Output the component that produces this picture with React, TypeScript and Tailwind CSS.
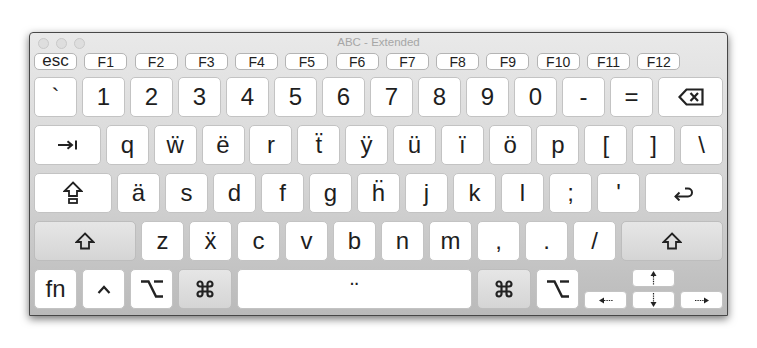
import React from "react";
import { Command } from "lucide-react";

const font = { fontFamily: '"Liberation Sans", Arial, sans-serif' };

function Key({
  children,
  w = "w-[43px]",
  grey = false,
  extra = "",
}: {
  children?: React.ReactNode;
  w?: string;
  grey?: boolean;
  extra?: string;
}) {
  return (
    <div
      className={`${w} h-full shrink-0 flex items-center justify-center rounded-[5px] border text-[24px] leading-none text-[#1e1e1e] ${
        grey
          ? "bg-linear-to-b from-[#e6e6e6] to-[#d5d5d5] border-[#bdbdbd]"
          : "bg-white border-[#c3c3c3]"
      } ${extra}`}
    >
      {children}
    </div>
  );
}

function FKey({ label, big = false }: { label: string; big?: boolean }) {
  return (
    <div
      className={`w-[43px] h-[17px] shrink-0 flex items-center justify-center rounded-[5px] border border-[#b4b4b4] bg-white text-[#1e1e1e] leading-none ${
        big ? "text-[17px] pb-[2px]" : "text-[14px]"
      }`}
    >
      {label}
    </div>
  );
}

const S = "#222";

const TabIcon = () => (
  <svg width="22" height="10" viewBox="0 0 22 10" fill="none" stroke={S} strokeWidth="2">
    <path d="M1 5H15" />
    <path d="M10.5 1.2L15 5L10.5 8.8" strokeLinejoin="miter" />
    <path d="M19 0.5V9.5" />
  </svg>
);

const CapsIcon = () => (
  <svg width="20" height="24" viewBox="0 0 20 24" fill="none" stroke={S} strokeWidth="1.8">
    <path d="M10 1.5L18.5 10H14V15H6V10H1.5Z" strokeLinejoin="miter" />
    <rect x="6" y="18" width="8" height="4" />
  </svg>
);

const ShiftIcon = () => (
  <svg width="20" height="18" viewBox="0 0 20 18" fill="none" stroke={S} strokeWidth="1.8">
    <path d="M10 1.5L18.5 10H14V16.5H6V10H1.5Z" strokeLinejoin="miter" />
  </svg>
);

const DeleteIcon = () => (
  <svg width="26" height="18" viewBox="0 0 26 18" fill="none" stroke={S} strokeWidth="2.2">
    <path d="M1.5 9L8.5 1.5H24.5V16.5H8.5Z" strokeLinejoin="miter" />
    <path d="M12.5 5L20 13M20 5L12.5 13" />
  </svg>
);

const ReturnIcon = () => (
  <svg width="22" height="16" viewBox="0 0 22 16" fill="none" stroke={S} strokeWidth="2">
    <path d="M2.5 11.5H15A4 4 0 0 0 15 3.5H12" />
    <path d="M6.5 7.5L2.5 11.5L6.5 15.5" />
  </svg>
);

const OptionIcon = () => (
  <svg width="22" height="18" viewBox="0 0 22 18" fill="none" stroke={S} strokeWidth="2.4">
    <path d="M0 1.5H7.5L15 16.5H22" />
    <path d="M13 1.5H22" />
  </svg>
);

const CtrlIcon = () => (
  <svg width="14" height="9" viewBox="0 0 14 9" fill="none" stroke={S} strokeWidth="2.2">
    <path d="M1.5 8L7 2L12.5 8" />
  </svg>
);

const CmdIcon = () => <Command size={20} strokeWidth={2.6} color={S} />;

const ArrowLeft = () => (
  <svg width="14" height="7" viewBox="0 0 14 7">
    <polygon points="0,3.5 5,0.5 5,6.5" fill={S} />
    <path d="M5 3.5H14" stroke={S} strokeWidth="1.2" strokeDasharray="1.4 1" />
  </svg>
);
const ArrowRight = () => (
  <svg width="14" height="7" viewBox="0 0 14 7">
    <polygon points="14,3.5 9,0.5 9,6.5" fill={S} />
    <path d="M0 3.5H9" stroke={S} strokeWidth="1.2" strokeDasharray="1.4 1" />
  </svg>
);
const ArrowUp = () => (
  <svg width="7" height="14" viewBox="0 0 7 14">
    <polygon points="3.5,0 0.5,5 6.5,5" fill={S} />
    <path d="M3.5 5V14" stroke={S} strokeWidth="1.2" strokeDasharray="1.4 1" />
  </svg>
);
const ArrowDown = () => (
  <svg width="7" height="14" viewBox="0 0 7 14">
    <polygon points="3.5,14 0.5,9 6.5,9" fill={S} />
    <path d="M3.5 0V9" stroke={S} strokeWidth="1.2" strokeDasharray="1.4 1" />
  </svg>
);

export default function App() {
  const fkeys = ["F1", "F2", "F3", "F4", "F5", "F6", "F7", "F8", "F9", "F10", "F11", "F12"];
  const row1 = ["`", "1", "2", "3", "4", "5", "6", "7", "8", "9", "0", "-", "="];
  const row2 = ["q", "w\u0308", "ë", "r", "t\u0308", "ÿ", "ü", "ï", "ö", "p", "[", "]", "\\"];
  const row3 = ["ä", "s", "d", "f", "g", "h\u0308", "j", "k", "l", ";", "'"];
  const row4 = ["z", "x\u0308", "c", "v", "b", "n", "m", ",", ".", "/"];

  return (
    <div className="w-[757px] h-[348px] bg-white pt-[32px] pl-[29px]" style={font}>
      <div className="w-[699px] h-[284px] border border-[#474747] rounded-t-[4px] bg-linear-to-b from-[#e9e9e9] via-[#d6d6d6] to-[#bababa] shadow-[0_3px_9px_rgba(0,0,0,0.55)] flex flex-col">
        {/* title bar */}
        <div className="h-[20px] grid grid-cols-[1fr_auto_1fr] items-center">
          <div className="flex items-center gap-[7px] pl-[8px]">
            <div className="w-[11px] h-[11px] rounded-full border border-[#c9c9c9] bg-[#dedede]" />
            <div className="w-[11px] h-[11px] rounded-full border border-[#c9c9c9] bg-[#dedede]" />
            <div className="w-[11px] h-[11px] rounded-full border border-[#c9c9c9] bg-[#dedede]" />
          </div>
          <div className="text-[11.5px] text-[#a6a6a6] leading-none">ABC - Extended</div>
          <div />
        </div>

        {/* function row */}
        <div className="flex gap-[7.27px] pl-[4px]">
          <FKey label="esc" big />
          {fkeys.map((k) => (
            <FKey key={k} label={k} />
          ))}
        </div>

        <div className="flex flex-col gap-[8px] pl-[4px] mt-[7px]">
          {/* row 1 */}
          <div className="flex gap-[5px] h-[40px]">
            {row1.map((k) => (
              <Key key={k}>{k}</Key>
            ))}
            <Key w="w-[65px]">
              <DeleteIcon />
            </Key>
          </div>
          {/* row 2 */}
          <div className="flex gap-[4.85px] h-[40px]">
            <Key w="w-[67px]">
              <TabIcon />
            </Key>
            {row2.map((k) => (
              <Key key={k}>{k}</Key>
            ))}
          </div>
          {/* row 3 */}
          <div className="flex gap-[5px] h-[40px]">
            <Key w="w-[78px]">
              <CapsIcon />
            </Key>
            {row3.map((k) => (
              <Key key={k}>{k}</Key>
            ))}
            <Key w="w-[78px]">
              <ReturnIcon />
            </Key>
          </div>
          {/* row 4 */}
          <div className="flex gap-[5px] h-[40px]">
            <Key w="w-[102px]" grey>
              <ShiftIcon />
            </Key>
            {row4.map((k) => (
              <Key key={k}>{k}</Key>
            ))}
            <Key w="w-[102px]" grey>
              <ShiftIcon />
            </Key>
          </div>
          {/* row 5 */}
          <div className="flex gap-[5px] h-[40px]">
            <Key>fn</Key>
            <Key>
              <CtrlIcon />
            </Key>
            <Key>
              <OptionIcon />
            </Key>
            <Key w="w-[54px]" grey>
              <CmdIcon />
            </Key>
            <Key w="w-[235px]" extra="pt-[4px]">
              ¨
            </Key>
            <Key w="w-[54px]" grey>
              <CmdIcon />
            </Key>
            <Key>
              <OptionIcon />
            </Key>
            <div className="w-[43px] h-full flex flex-col justify-end">
              <div className="h-[18px] rounded-[4px] border border-[#c3c3c3] bg-white flex items-center justify-center">
                <ArrowLeft />
              </div>
            </div>
            <div className="w-[43px] h-full flex flex-col gap-[4px]">
              <div className="h-[18px] rounded-[4px] border border-[#c3c3c3] bg-white flex items-center justify-center">
                <ArrowUp />
              </div>
              <div className="h-[18px] rounded-[4px] border border-[#c3c3c3] bg-white flex items-center justify-center">
                <ArrowDown />
              </div>
            </div>
            <div className="w-[43px] h-full flex flex-col justify-end">
              <div className="h-[18px] rounded-[4px] border border-[#c3c3c3] bg-white flex items-center justify-center">
                <ArrowRight />
              </div>
            </div>
          </div>
        </div>
      </div>
    </div>
  );
}
